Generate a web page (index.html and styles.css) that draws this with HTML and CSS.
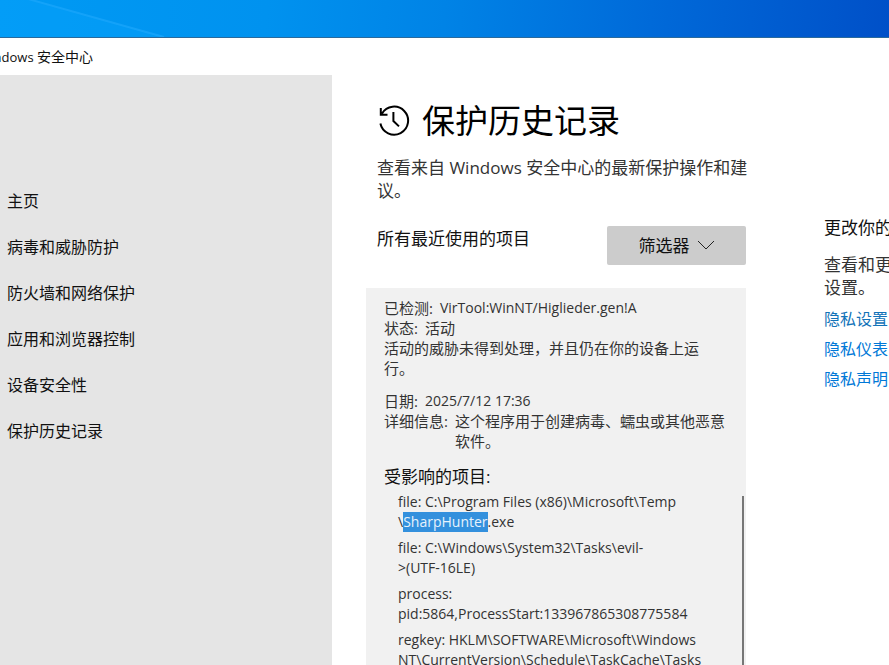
FILE: index.html
```html
<!DOCTYPE html>
<html lang="zh-CN">
<head>
<meta charset="utf-8">
<title>Windows 安全中心</title>
<link rel="stylesheet" href="styles.css">
</head>
<body>
<div class="desktop">
  <svg class="ray" viewBox="0 0 170 37" aria-hidden="true">
    <path d="M0 0H28L164 37H0Z" fill="#0aa3fb" opacity=".35"/>
    <path d="M28 -1L164 37" stroke="#27adff" stroke-width="2" opacity=".5"/>
  </svg>
</div>
<div class="window">
  <header class="titlebar"><span class="caption"><span class="latin">Windows&nbsp;</span>安全中心</span></header>
  <div class="body">
    <nav class="sidebar">
      <a href="#home">主页</a>
      <a href="#virus">病毒和威胁防护</a>
      <a href="#firewall">防火墙和网络保护</a>
      <a href="#apps">应用和浏览器控制</a>
      <a href="#device">设备安全性</a>
      <a href="#history">保护历史记录</a>
    </nav>
    <main class="content">
      <h1 class="title">
        <svg class="history" viewBox="0 0 32 32" aria-hidden="true">
          <path d="M2.4 19.5A14 14 0 1 0 4 9.6M2.8 4V10.8H9.5M15.4 8V17L21 22.4"/>
        </svg>
        保护历史记录
      </h1>
      <p class="lead">查看来自 Windows 安全中心的最新保护操作和建<br>议。</p>
      <div class="toolbar">
        <h2>所有最近使用的项目</h2>
        <button class="filter" type="button">筛选器
          <svg class="chevron" viewBox="0 0 18 10" aria-hidden="true"><path d="M1 1L9 9L17 1"/></svg>
        </button>
      </div>
      <section class="card">
        <dl class="facts">
          <div><dt>已检测:</dt><dd class="latin">VirTool:WinNT/Higlieder.gen!A</dd></div>
          <div><dt>状态:</dt><dd>活动</dd></div>
        </dl>
        <p class="note">活动的威胁未得到处理，并且仍在你的设备上运<br>行。</p>
        <dl class="facts">
          <div><dt>日期:</dt><dd class="latin">2025/7/12 17:36</dd></div>
          <div><dt>详细信息:</dt><dd>这个程序用于创建病毒、蠕虫或其他恶意<br>软件。</dd></div>
        </dl>
        <h3>受影响的项目:</h3>
        <div class="affected">
          <ul class="items latin">
            <li>file: C:\Program Files (x86)\Microsoft\Temp<br>\<mark>SharpHunter</mark>.exe</li>
            <li>file: C:\Windows\System32\Tasks\evil-<br>&gt;(UTF-16LE)</li>
            <li>process:<br>pid:5864,ProcessStart:133967865308775584</li>
            <li>regkey: HKLM\SOFTWARE\Microsoft\Windows<br>NT\CurrentVersion\Schedule\TaskCache\Tasks</li>
          </ul>
          <div class="scrollbar"></div>
        </div>
      </section>
    </main>
    <aside class="related">
      <h2>更改你的</h2>
      <p>查看和更<br>设置。</p>
      <a class="visited" href="#settings">隐私设置</a>
      <a href="#dashboard">隐私仪表</a>
      <a href="#statement">隐私声明</a>
    </aside>
  </div>
</div>
</body>
</html>
```
FILE: styles.css
```css
* {
  box-sizing: border-box;
  margin: 0;
  padding: 0;
}

body {
  display: flex;
  flex-direction: column;
  height: 100vh;
  overflow: hidden;
  background: #fff;
  color: #111;
  font-family: "Open Sans", "Noto Sans CJK SC", sans-serif;
  font-size: 16px;
}

h1,
h2,
h3 {
  font-weight: 400;
}

a {
  text-decoration: none;
}

.desktop {
  flex: none;
  height: 38px;
  border-bottom: 1px solid #2a6a9c;
  background: linear-gradient(95deg, #009af4 0%, #0092ef 30%, #0083e6 50%, #0068d8 75%, #0050c8 100%);
}

.ray {
  display: block;
  width: 170px;
  height: 37px;
}

.window {
  flex: 1;
  display: flex;
  flex-direction: column;
  min-height: 0;
}

.titlebar {
  flex: none;
  height: 37px;
}

.caption {
  display: flex;
  justify-content: flex-end;
  width: 93px;
  overflow: hidden;
  font-size: 14px;
  line-height: 38px;
  white-space: nowrap;
}

.caption .latin {
  font-size: 13px;
}

.body {
  flex: 1;
  display: flex;
  min-height: 0;
}

.sidebar {
  flex: none;
  display: flex;
  flex-direction: column;
  gap: 22px;
  width: 332px;
  padding: 114px 7px 0;
  background: #e5e5e5;
}

.sidebar a {
  color: #111;
  line-height: 24px;
}

.content {
  flex: none;
  display: flex;
  flex-direction: column;
  width: 380px;
  min-height: 0;
  margin-left: 34px;
  padding-top: 23px;
}

.title {
  display: flex;
  align-items: center;
  gap: 12px;
  padding-left: 12px;
  color: #000;
  font-size: 33px;
  line-height: 46px;
}

.history {
  width: 32px;
  height: 32px;
  margin-bottom: 3px;
  fill: none;
  stroke: #000;
  stroke-width: 2;
}

.lead {
  padding: 12px 0 0 11px;
  color: #333;
  font-size: 17px;
  line-height: 23px;
  white-space: nowrap;
}

.toolbar {
  display: flex;
  justify-content: space-between;
  padding: 24px 0 23px 11px;
}

.toolbar h2 {
  font-size: 17px;
  line-height: 26px;
}

.filter {
  display: flex;
  align-items: center;
  justify-content: center;
  gap: 7px;
  width: 139px;
  height: 39px;
  padding-bottom: 2px;
  border: 0;
  border-radius: 2px;
  background: #ccc;
  color: #111;
  font-family: inherit;
  font-size: 17px;
}

.chevron {
  width: 18px;
  height: 10px;
  fill: none;
  stroke: #222;
}

.card {
  flex: 1;
  display: flex;
  flex-direction: column;
  min-height: 0;
  overflow: hidden;
  padding: 10px 2px 0 18px;
  background: #f1f1f1;
  color: #333;
  font-size: 15px;
  line-height: 20px;
  white-space: nowrap;
}

.facts div {
  display: flex;
  gap: 7px;
}

.note {
  padding-bottom: 13px;
}

.card h3 {
  padding-top: 14px;
  color: #111;
  font-size: 17px;
  line-height: 24px;
}

.affected {
  flex: 1;
  display: flex;
  justify-content: space-between;
  min-height: 0;
  margin-top: 3px;
  padding-left: 14px;
}

.items {
  display: flex;
  flex-direction: column;
  gap: 6px;
  list-style: none;
}

.card .latin {
  font-size: 14px;
}

.items mark {
  display: inline-block;
  background: #3390dd;
  color: #e6f2fc;
}

.scrollbar {
  width: 2px;
  margin-top: 4px;
  background: #777;
}

.related {
  flex: none;
  display: flex;
  flex-direction: column;
  margin-left: 78px;
  padding-top: 141px;
  white-space: nowrap;
}

.related h2 {
  font-size: 17px;
  line-height: 24px;
}

.related p {
  padding: 13px 0 8px;
  color: #333;
  font-size: 17px;
  line-height: 23px;
}

.related a {
  color: #0078d7;
  line-height: 24px;
  margin-bottom: 6px;
}

.related .visited {
  color: #1273b8;
}
```
